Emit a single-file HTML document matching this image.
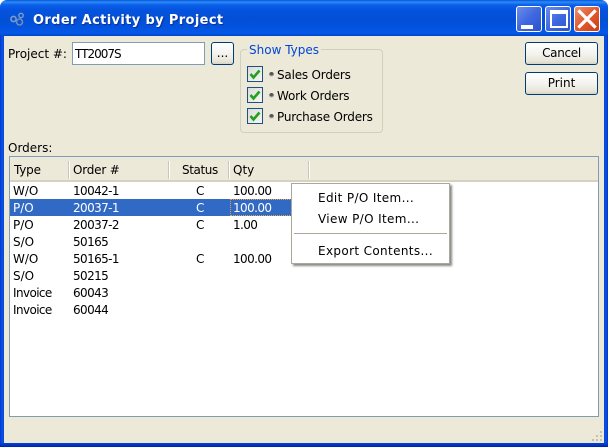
<!DOCTYPE html>
<html><head><meta charset="utf-8"><style>
html,body{margin:0;padding:0;width:608px;height:447px;overflow:hidden;background:#fff}
*{box-sizing:border-box}
.a{position:absolute}
.t{position:absolute;font:12px/16px "DejaVu Sans",sans-serif;color:#000;white-space:pre}
.n{letter-spacing:-.6px}
.m{letter-spacing:.36px}
.g{letter-spacing:-.2px}
#win{position:absolute;left:0;top:0;width:608px;height:447px;background:#ECE9D8;border-radius:7px 7px 0 0;overflow:hidden}
#title{position:absolute;left:0;top:0;width:608px;height:36px;background:linear-gradient(#0553D8 0,#2C8BF5 2px,#0A5FEA 5px,#0453DE 10px,#0350D6 20px,#0353E0 28px,#0458E8 33px,#0346C8 36px)}
.fl{position:absolute;left:0;top:36px;width:4px;height:411px;background:linear-gradient(90deg,#0831D9,#0855DD 50%,#0348D8)}
.fr{position:absolute;right:0;top:36px;width:4px;height:411px;background:linear-gradient(270deg,#0831D9,#0855DD 50%,#0348D8)}
.fb{position:absolute;left:0;bottom:0;width:608px;height:4px;background:linear-gradient(#0344D0,#0231C4 60%,#001EA0)}
.btn{position:absolute;border:1px solid #003C74;border-radius:3px;background:linear-gradient(#FFFFFF,#F4F3EE 50%,#E8E6DA 85%,#D8D4C4);text-align:center;font:12px/21px "DejaVu Sans",sans-serif;color:#000}
.cb{position:absolute;width:16px;height:16px;border:1px solid #1C5180;background:linear-gradient(135deg,#DCDCD6,#F6F6F2)}
.dot{position:absolute;width:5px;height:5px;border-radius:50%;background:radial-gradient(circle at 50% 25%,#555 0 35%,#ccc 70%,#fff)}
.sep{position:absolute;top:161px;width:2px;height:18px;background:linear-gradient(90deg,#CBC7B8 50%,#fff 50%)}
.wb{position:absolute;top:6px;width:26px;height:26px;border:1px solid #fff;border-radius:3px}
</style></head><body>
<div id="win">
<div id="title"></div>
<div class="fl"></div><div class="fr"></div><div class="fb"></div>

<svg class="a" style="left:9px;top:12px" width="17" height="15" viewBox="0 0 17 15" fill="none">
<circle cx="4.500" cy="7" r="2.600" stroke="#7C9CC8" stroke-width="1.600"/>
<circle cx="10.500" cy="10" r="3" stroke="#6E8DB8" stroke-width="1.600"/>
<circle cx="12" cy="3.500" r="2.200" stroke="#7C9CC8" stroke-width="1.400"/>
</svg>
<div class="t" style="left:33px;top:12px;font:bold 13px/18px 'DejaVu Sans',sans-serif;color:#fff;letter-spacing:.36px;text-shadow:1px 1px 1px #0A2F9C">Order Activity by Project</div>

<div class="wb" style="left:516px;background:linear-gradient(135deg,#6A8CEC,#3F68E0 50%,#2C52CC)"><div class="a" style="left:4px;top:18px;width:12px;height:4px;background:#fff"></div></div>
<div class="wb" style="left:545px;background:linear-gradient(135deg,#6A8CEC,#3F68E0 50%,#2C52CC)"><div class="a" style="left:4px;top:3px;width:18px;height:18px;border:2px solid #fff;border-top-width:4px"></div></div>
<div class="wb" style="left:574px;background:linear-gradient(135deg,#EC9070,#E2592E 50%,#C83E18)">
<svg class="a" style="left:0;top:0" width="24" height="24" viewBox="0 0 24 24"><path d="M4.500 4.500L19.500 19.500M19.500 4.500L4.500 19.500" stroke="#fff" stroke-width="3.200" stroke-linecap="square"/></svg></div>

<div class="t" style="left:8px;top:46px">Project #:</div>
<div class="a" style="left:72px;top:42px;width:133px;height:23px;background:#fff;border:1px solid #7F9DB9"></div>
<div class="t" style="left:75px;top:46px;letter-spacing:-1px">TT2007S</div>
<div class="btn" style="left:211px;top:42px;width:23px;height:23px">...</div>

<div class="a" style="left:240px;top:49px;width:143px;height:84px;border:1px solid #D0D0BF;border-radius:4px"></div>
<div class="a" style="left:247px;top:45px;width:74px;height:10px;background:#ECE9D8"></div>
<div class="t" style="left:249px;top:42px;color:#0046D5">Show Types</div>

<div class="cb" style="left:247px;top:66px"></div>
<div class="cb" style="left:247px;top:87px"></div>
<div class="cb" style="left:247px;top:108px"></div>
<svg class="a" style="left:247px;top:66px" width="16" height="58" fill="none" stroke="#21A121" stroke-width="2.600"><path d="M3.500 8L6.500 11.500L12.500 4.500"/><path d="M3.500 29L6.500 32.500L12.500 25.500"/><path d="M3.500 50L6.500 53.500L12.500 46.500"/></svg>
<div class="dot" style="left:269px;top:72px"></div>
<div class="dot" style="left:269px;top:93px"></div>
<div class="dot" style="left:269px;top:114px"></div>
<div class="t g" style="left:277px;top:67px">Sales Orders</div>
<div class="t g" style="left:277px;top:88px">Work Orders</div>
<div class="t g" style="left:277px;top:109px">Purchase Orders</div>

<div class="btn" style="left:525px;top:42px;width:73px;height:23px;letter-spacing:-.3px">Cancel</div>
<div class="btn" style="left:525px;top:72px;width:73px;height:23px">Print</div>

<div class="t" style="left:8px;top:140px">Orders:</div>
<div class="a" style="left:9px;top:156px;width:590px;height:261px;background:#fff;border:1px solid #7F9DB9"></div>
<div class="a" style="left:10px;top:157px;width:588px;height:25px;background:#ECE9D8;border-bottom:2px solid #D6D2C2"></div>
<div class="sep" style="left:68px"></div>
<div class="sep" style="left:168px"></div>
<div class="sep" style="left:228px"></div>
<div class="sep" style="left:308px"></div>
<div class="t g" style="left:14px;top:162px">Type</div>
<div class="t g" style="left:73px;top:162px">Order #</div>
<div class="t" style="left:182px;top:162px;letter-spacing:-.4px">Status</div>
<div class="t" style="left:233px;top:162px">Qty</div>

<div class="a" style="left:10px;top:199px;width:282px;height:17px;background:#316AC5"></div>
<div class="a" style="left:230px;top:199px;width:62px;height:17px;border:1px dotted #E8A040;border-right:0"></div>

<div class="t" style="left:13px;top:183px">W/O</div><div class="t n" style="left:73px;top:183px">10042-1</div><div class="t" style="left:196px;top:183px">C</div><div class="t n" style="left:233px;top:183px">100.00</div>
<div class="t" style="left:13px;top:200px;color:#fff">P/O</div><div class="t n" style="left:73px;top:200px;color:#fff">20037-1</div><div class="t" style="left:196px;top:200px;color:#fff">C</div><div class="t n" style="left:233px;top:200px;color:#fff">100.00</div>
<div class="t" style="left:13px;top:217px">P/O</div><div class="t n" style="left:73px;top:217px">20037-2</div><div class="t" style="left:196px;top:217px">C</div><div class="t n" style="left:233px;top:217px">1.00</div>
<div class="t" style="left:13px;top:234px">S/O</div><div class="t n" style="left:73px;top:234px">50165</div>
<div class="t" style="left:13px;top:251px">W/O</div><div class="t n" style="left:73px;top:251px">50165-1</div><div class="t" style="left:196px;top:251px">C</div><div class="t n" style="left:233px;top:251px">100.00</div>
<div class="t" style="left:13px;top:268px">S/O</div><div class="t n" style="left:73px;top:268px">50215</div>
<div class="t n" style="left:13px;top:285px">Invoice</div><div class="t n" style="left:73px;top:285px">60043</div>
<div class="t n" style="left:13px;top:302px">Invoice</div><div class="t n" style="left:73px;top:302px">60044</div>

<div class="a" style="left:291px;top:183px;width:159px;height:81px;background:#fff;border:1px solid #ACA899;box-shadow:2px 2px 2px #8a8a8a"></div>
<div class="a" style="left:294px;top:233px;width:153px;height:1px;background:#ACA899"></div>
<div class="t m" style="left:318px;top:190px">Edit P/O Item...</div>
<div class="t m" style="left:318px;top:211px">View P/O Item...</div>
<div class="t m" style="left:318px;top:243px">Export Contents...</div>

<svg class="a" style="left:590px;top:429px" width="14" height="14" fill="#C4C1B0"><rect x="10" y="2" width="2" height="2"/><rect x="6" y="6" width="2" height="2"/><rect x="10" y="6" width="2" height="2"/><rect x="2" y="10" width="2" height="2"/><rect x="6" y="10" width="2" height="2"/><rect x="10" y="10" width="2" height="2"/></svg>
</div>
</body></html>
